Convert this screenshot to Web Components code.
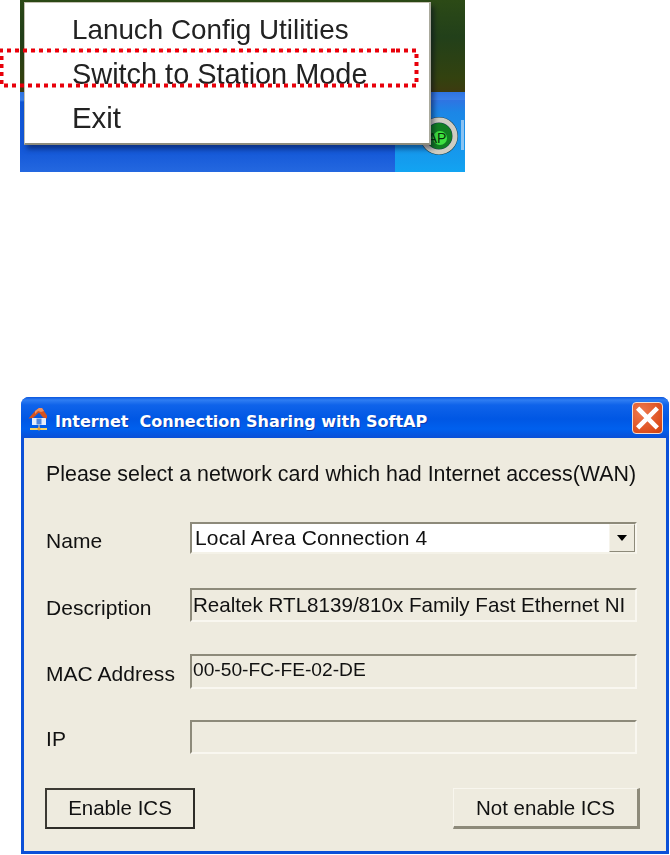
<!DOCTYPE html>
<html><head><meta charset="utf-8"><title>SoftAP</title>
<style>
html,body{margin:0;padding:0;background:#fff}
body{width:670px;height:855px;overflow:hidden;font-family:"Liberation Sans",Arial,sans-serif;color:#111}
</style></head><body>
<tray-shot>
  <menu-item style="font-size:27.8px">Lanuch Config Utilities</menu-item>
  <menu-item style="font-size:28.9px">Switch to Station Mode</menu-item>
  <menu-item style="font-size:29.4px">Exit</menu-item>
</tray-shot>
<xp-dialog caption="Internet  Connection Sharing with SoftAP">
  <div slot="note">Please select a network card which had Internet access(WAN)</div>
  <xp-field label="Name" kind="combo" h="32" gap="0" ly="8" ty="3" tx="3" fs="21" ls=".15">Local Area Connection 4</xp-field>
  <xp-field label="Description" h="34" gap="34" ly="9" ty="4" tx="1" fs="20.6" ls="0">Realtek RTL8139/810x Family Fast Ethernet NI</xp-field>
  <xp-field label="MAC Address" h="35" gap="32" ly="9" ty="3" tx="1" fs="19.2" ls="0">00-50-FC-FE-02-DE</xp-field>
  <xp-field label="IP" h="34" gap="31" ly="8" ty="2" tx="1" fs="20" ls="0"></xp-field>
  <xp-button slot="actions" w="150" primary>Enable ICS</xp-button>
  <xp-button slot="actions" w="187">Not enable ICS</xp-button>
</xp-dialog>
<script>
function tpl(html){const t=document.createElement('template');t.innerHTML=html;return t;}
const trayT=tpl(`<style>
:host{display:block;position:relative;width:670px;height:172px;overflow:hidden}
.shot{margin-left:20px;width:445px;height:172px;overflow:hidden;position:relative;padding-top:2px;box-sizing:border-box;
 background:
  linear-gradient(#2f74e2,#1c86e6 12px,#149cee 60px,#12a4f2) 375px 100px/70px 72px no-repeat,
  linear-gradient(#2f74e2 0,#3a80e8 8px,#0f55d6 10px,#1559d8 60px,#2468e0 80px) 0 92px/100% 80px no-repeat,
  linear-gradient(#2c4a16 0,#22401a 40%,#33420f 85%,#3d3a10 100%) 0 0/100% 92px no-repeat;}
.menu{margin-left:4px;width:407px;height:143px;box-sizing:border-box;background:#fff;padding-top:5px;display:flex;flex-direction:column;
 border:1px solid #c4c1b2;border-right:2px solid #aaa99c;border-bottom:2px solid #8e8c7c;
 box-shadow:3px 4px 5px rgba(0,0,30,.45);filter:blur(.5px)}
.dots{position:absolute;left:0;top:48px;width:420px;height:42px}
.tray{position:absolute;left:399px;top:112px;width:46px;height:48px}
</style>
<div class="shot"><svg class="tray" viewBox="0 0 46 48">
 <circle cx="20" cy="24" r="19" fill="#1a2a20" opacity=".75"/>
 <circle cx="20" cy="24" r="16" fill="none" stroke="#cfcdc2" stroke-width="5"/>
 <circle cx="20" cy="24" r="13" fill="#127f22"/>
 <circle cx="21" cy="26" r="7" fill="#3fe040"/>
 <text x="18" y="31" font-family="Liberation Sans" font-size="14" text-anchor="middle" fill="#063008">AP</text>
 <rect x="42" y="8" width="3" height="30" fill="#bcd8f4" opacity=".7"/>
</svg><div class="menu"><slot></slot></div></div>
<svg class="dots" viewBox="0 0 420 42">
 <path d="M-1 2.5H396M396 2.5H416.5V37.5H0" fill="none" stroke="#e8000a" stroke-width="4" stroke-dasharray="4 4"/>
 <path d="M1.5 8V36" fill="none" stroke="#e8000a" stroke-width="4" stroke-dasharray="4 4"/>
</svg>`);
class TrayShot extends HTMLElement{constructor(){super();this.attachShadow({mode:'open'}).appendChild(trayT.content.cloneNode(true));}}
customElements.define('tray-shot',TrayShot);

const itemT=tpl(`<style>:host{display:block;height:44px;padding-left:47px;font:28px/44px "Liberation Sans",Arial,sans-serif;color:#222;white-space:nowrap}</style><slot></slot>`);
class MenuItem extends HTMLElement{constructor(){super();this.attachShadow({mode:'open'}).appendChild(itemT.content.cloneNode(true));}}
customElements.define('menu-item',MenuItem);

const dlgT=tpl(`<style>
:host{display:flex;flex-direction:column;margin:225px 0 0 21px;width:648px;height:457px;box-sizing:border-box;border-radius:8px 8px 0 0;overflow:hidden;
 background:#0b50d8}
.bar{flex:0 0 41px;display:flex;align-items:center;box-sizing:border-box;padding:0 6px 0 6px;
 background:linear-gradient(#0a57df 0,#2f7df2 3px,#0f63ea 8px,#0057e4 22px,#0060ee 32px,#0a4fd6 41px)}
.ic{width:22px;height:26px;flex:none;margin-right:6px}
.t{flex:1;color:#fff;font:bold 16px "DejaVu Sans",Verdana,sans-serif;white-space:pre;letter-spacing:-.03px;text-shadow:1px 1px 0 #0a3cb0;padding-top:7px}
.x{width:31px;height:32px;box-sizing:border-box;border:1.5px solid #f2ddd2;border-radius:4px;background:radial-gradient(circle at 30% 30%,#ef7a4f,#dd4f1e 70%,#c8400f);flex:none}
.x svg{display:block;width:100%;height:100%}
.body{flex:1;margin:0 3px 3px 3px;background:#eeebdf;display:flex;flex-direction:column;padding:0 0 0 22px;filter:blur(.3px)}
.note{font:21.4px/22px "Liberation Sans",Arial,sans-serif;color:#111;margin-top:25px;white-space:nowrap}
.rows{margin-top:37px;display:flex;flex-direction:column}
.acts{margin:34px 0 0 -1px;display:flex;justify-content:space-between;width:595px}
</style>
<div class="bar">
 <svg class="ic" viewBox="0 0 22 26">
  <path d="M5 13h14v7H5z" fill="#e6eefa"/>
  <path d="M1.5 13.5L8 6l4-3h3l5 7.5v3l-4-1-4-5-6 5.5z" fill="#d4521f"/>
  <path d="M8 6l4-3h3l2 3-3 1-3-1-3 3z" fill="#f09060"/>
  <rect x="9.5" y="13.5" width="5" height="6" fill="#4f86dc"/>
  <path d="M12 20v3" stroke="#9aa6b8" stroke-width="1.6"/>
  <path d="M3 24h17" stroke="#f2d468" stroke-width="1.8"/>
  <circle cx="12" cy="23.8" r="1.6" fill="#eea530"/>
 </svg>
 <div class="t" id="cap"></div>
 <div class="x"><svg viewBox="0 0 28 29"><path d="M6 6.5L22 22.5M22 6.5L6 22.5" stroke="#fff" stroke-width="4.4" stroke-linecap="square"/></svg></div>
</div>
<div class="body">
 <div class="note"><slot name="note"></slot></div>
 <div class="rows"><slot></slot></div>
 <div class="acts"><slot name="actions"></slot></div>
</div>`);
class XpDialog extends HTMLElement{constructor(){super();const s=this.attachShadow({mode:'open'});s.appendChild(dlgT.content.cloneNode(true));s.getElementById('cap').textContent=this.getAttribute('caption');}}
customElements.define('xp-dialog',XpDialog);

const fieldT=tpl(`<style>
:host{display:flex;white-space:nowrap}
.l{width:144px;flex:none;font:21px/22px "Liberation Sans",Arial,sans-serif;color:#111;letter-spacing:.05px;overflow:visible}
.f{width:447px;flex:none;box-sizing:border-box;border:2px solid;border-color:#8d8a7a #f9f7f0 #f9f7f0 #8d8a7a;display:flex;position:relative;
 font-family:"Liberation Sans",Arial,sans-serif;line-height:22px;color:#111}
:host([kind=combo]) .f{background:#fff;border-bottom-color:#f4f2e8}
.arrow{display:none;position:absolute;right:0;top:0;bottom:0;width:26px;box-sizing:border-box;background:#eeebdf;border:1px solid;border-color:#f6f4ec #8d8a7a #8d8a7a #f6f4ec;align-items:center;justify-content:center}
:host([kind=combo]) .arrow{display:flex}
.arrow i{display:block;width:0;height:0;border:5px solid transparent;border-top:6px solid #000;border-bottom:0}
</style>
<div class="l" id="l"></div>
<div class="f" id="f"><span id="v"><slot></slot></span><div class="arrow"><i></i></div></div>`);
class XpField extends HTMLElement{constructor(){super();const s=this.attachShadow({mode:'open'});s.appendChild(fieldT.content.cloneNode(true));
 const a=n=>this.getAttribute(n);
 s.getElementById('l').textContent=a('label');
 s.getElementById('l').style.paddingTop=a('ly')+'px';
 const f=s.getElementById('f');f.style.height=a('h')+'px';
 const v=s.getElementById('v');v.style.padding=a('ty')+'px 0 0 '+a('tx')+'px';v.style.fontSize=a('fs')+'px';v.style.letterSpacing=a('ls')+'px';
 this.style.marginTop=a('gap')+'px';}}
customElements.define('xp-field',XpField);

const btnT=tpl(`<style>
:host{display:block;height:41px;box-sizing:border-box;background:#eeebdf;border:1px solid;border-color:#f8f6ee #8d8a7a #8d8a7a #f8f6ee;border-width:1px 3px 3px 1px;
 font:20.5px/37px "Liberation Sans",Arial,sans-serif;color:#111;text-align:center}
:host([primary]){border:2px solid;border-color:#3c3a34 #2e2c28 #2e2c28 #3c3a34;line-height:35px}
</style><slot></slot>`);
class XpButton extends HTMLElement{constructor(){super();this.attachShadow({mode:'open'}).appendChild(btnT.content.cloneNode(true));this.style.width=this.getAttribute('w')+'px';}}
customElements.define('xp-button',XpButton);
</script>
</body></html>
